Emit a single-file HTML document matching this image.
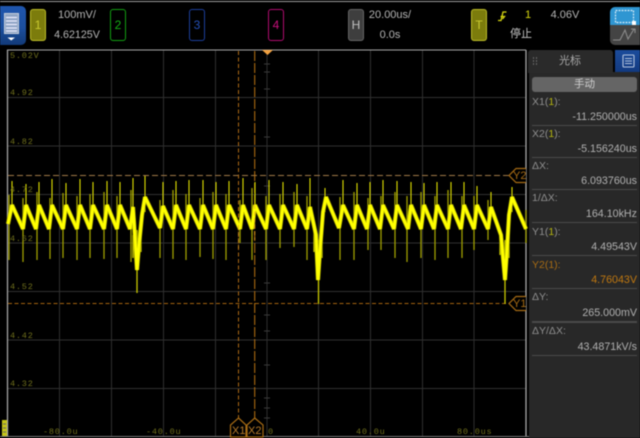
<!DOCTYPE html>
<html><head><meta charset="utf-8">
<style>
html,body{margin:0;padding:0;background:#000;}
#r{position:relative;width:640px;height:438px;overflow:hidden;background:#000;filter:blur(.55px);font-family:"Liberation Sans","Noto Sans CJK SC",sans-serif;color:#b4b4b4;font-size:11px;}
#r div{position:absolute;white-space:nowrap;}
.c{transform:translateX(-50%);}
.b{box-sizing:border-box;border-radius:3px;border-width:1px;border-style:solid;text-align:center;line-height:30px;font-size:12px;}
.l{left:532px;color:#8f8f8f;font-size:10.5px;line-height:12px;}
.v{right:3px;color:#b0b0b0;font-size:10.7px;line-height:12px;}
.s{left:532px;width:105px;height:1px;background:#4a4a4a;}
.y{color:#b5b50f;}
.a{color:#6e6e1c;font:8.5px/9px "Liberation Mono",monospace;letter-spacing:.8px;}
</style></head><body>
<div id="r">
<div style="left:0;top:1px;width:640px;height:1px;background:#9a9a9a"></div>

<svg style="position:absolute;left:0;top:0" width="640" height="438" viewBox="0 0 640 438">
<path d="M59.5 50V436M111.5 50V436M163.5 50V436M215.5 50V436M267 50V436M318.5 50V436M370.5 50V436M422.5 50V436M474 50V436" stroke="#2e2e2e" stroke-width="1" fill="none"/>
<path d="M8 97.5H526M8 146H526M8 194.5H526M8 243H526M8 291.5H526M8 340H526M8 388.500H526" stroke="#303030" stroke-width="1" fill="none"/>
<path d="M264 64h6M264 72h6M264 89h6M264 137h6M264 186h6M264 283h6M264 315h6M264 331h6M264 365h6M264 398h6M264 408h6M264 418h6" stroke="#3a3a3a" stroke-width="1"/>
<path d="M7.500 50V436" stroke="#a4a4a4" stroke-width="1.300"/>
<path d="M526 50V436" stroke="#a8a8a8" stroke-width="1.300"/>
<path d="M7 50H526" stroke="#a8a8a8" stroke-width="1"/>
<path d="M0 436.500H530" stroke="#777" stroke-width="1"/>
<path d="M8 175.500H510" stroke="#a27a48" stroke-width="1" stroke-dasharray="6 3"/>
<path d="M8 303.500H510" stroke="#a5640f" stroke-width="1" stroke-dasharray="4 2.500"/>
<path d="M238.500 51V418" stroke="#b06c14" stroke-width="1" stroke-dasharray="4 2.500"/>
<path d="M254.700 51V418" stroke="#bc7412" stroke-width="1" stroke-dasharray="10 2"/>
<path d="M262 50H273L267.500 55Z" fill="#f0a040"/>

<path d="M9 195V260M23 198V262M37 192V260M50 198V259M63 193V258M77 196V260M90 194V258M104 192V259M117 196V258M131 190V262M160 200V258M173 190V259M186 194V260M200 198V257M213 192V259M226 194V260M240 200V243M252 188V260M266 196V260M280 194V248M294 192V247M307 196V260M340 197V260M354 192V260M368 198V250M381 196V250M395 192V258M407 196V262M421 192V258M435 196V260M448 190V258M462 196V258M474 196V250M488 200V240M526 210V243" stroke="#a0a000" stroke-width="1.300" fill="none"/>
<path d="M12 181V212M26 184V212M39 182V212M52 179V212M66 183V212M80 179V212M93 182V212M107 181V212M120 182V212M133 178V212M145 176V212M163 182V212M176 181V212M189 180V212M203 180V212M216 182V212M229 181V212M243 178V212M255 182V212M269 180V212M283 182V212M297 184V212M310 178V212M325 188V212M343 180V212M357 183V212M370 182V212M383 180V212M397 181V212M411 182V212M424 183V212M437 182V212M451 182V212M464 182V212M477 186V212M491 192V212M512 187V212" stroke="#e0e000" stroke-width="1.100" fill="none"/>
<path d="M137 230V293M318.500 240V304M505 240V304M133 235V258M141 212V252M314 225V252M322 212V258M500 235V255M509 212V258" stroke="#c8c800" stroke-width="1.300" fill="none"/>
<path d="M8 224L12 205L23 229L26 205L36 229L39 205L49 229L52 205L63 229L66 205L77 229L80 205L90 229L93 205L104 229L107 205L117 229L120 205L130 229L133 207L135 238L137 270L139 245L142 215L145 197L160 228L163 206L173 229L176 205L186 229L189 205L200 229L203 205L213 229L216 205L226 229L229 205L240 229L243 205L252 229L255 205L266 229L269 205L280 229L283 205L294 229L297 205L307 229L310 207L316 235L318 280L320 250L323 212L326 197L339 228L343 205L354 229L357 205L367 229L370 205L380 229L383 205L394 229L397 205L408 229L411 205L421 229L424 205L434 229L437 205L448 229L451 205L461 229L464 205L474 229L477 205L488 229L491 207L501 235L505 280L507 250L509 215L512 197L526 229" stroke="#a8a800" stroke-width="4.300" fill="none" stroke-linejoin="bevel"/>
<path d="M8 224L12 205L23 229L26 205L36 229L39 205L49 229L52 205L63 229L66 205L77 229L80 205L90 229L93 205L104 229L107 205L117 229L120 205L130 229L133 207L135 238L137 270L139 245L142 215L145 197L160 228L163 206L173 229L176 205L186 229L189 205L200 229L203 205L213 229L216 205L226 229L229 205L240 229L243 205L252 229L255 205L266 229L269 205L280 229L283 205L294 229L297 205L307 229L310 207L316 235L318 280L320 250L323 212L326 197L339 228L343 205L354 229L357 205L367 229L370 205L380 229L383 205L394 229L397 205L408 229L411 205L421 229L424 205L434 229L437 205L448 229L451 205L461 229L464 205L474 229L477 205L488 229L491 207L501 235L505 280L507 250L509 215L512 197L526 229" stroke="#ffff00" stroke-width="3" fill="none" stroke-linejoin="bevel"/>
<path d="M238.500 225V250M254.700 205V240" stroke="#e8a020" stroke-width="1" stroke-dasharray="4 2.500" opacity=".7"/>

<path d="M526 168.500H516L509 175.500L516 182.500H526" fill="#000" stroke="#a86c14" stroke-width="1.200"/>
<path d="M526 296.500H516L509 303.500L516 310.500H526" fill="#000" stroke="#a86c14" stroke-width="1.200"/>
<path d="M238.500 418L246 425V437H230.500V425Z" fill="#000" stroke="#a86c14" stroke-width="1.200"/>
<path d="M254.700 418L263 425V437H247V425Z" fill="#000" stroke="#a86c14" stroke-width="1.200"/>
<rect x="2" y="420" width="5" height="16" fill="#c4c41a"/>
<path d="M3 424H6M3 428H6M3 432H6" stroke="#666" stroke-width="1"/>
</svg>

<div style="left:513px;top:170px;color:#a86c14;font-size:11px;line-height:12px">Y2</div>
<div style="left:513px;top:298px;color:#a86c14;font-size:11px;line-height:12px">Y1</div>
<div style="left:232px;top:425px;color:#b57a2a;font-size:11px;line-height:12px">X1</div>
<div style="left:248px;top:425px;color:#b57a2a;font-size:11px;line-height:12px">X2</div>

<div class="a" style="left:10px;top:52px">5.02V</div>
<div class="a" style="left:10px;top:89px">4.92</div>
<div class="a" style="left:10px;top:138px">4.82</div>
<div class="a" style="left:10px;top:186px">4.72</div>
<div class="a" style="left:10px;top:235px">4.62</div>
<div class="a" style="left:10px;top:283px">4.52</div>
<div class="a" style="left:10px;top:332px">4.42</div>
<div class="a" style="left:10px;top:380px">4.32</div>
<div class="a" style="left:43px;top:428px">-80.0u</div>
<div class="a" style="left:146px;top:428px">-40.0u</div>
<div class="a" style="left:268px;top:428px">0</div>
<div class="a" style="left:356px;top:428px">40.0u</div>
<div class="a" style="left:457px;top:428px">80.0us</div>

<div style="left:-6px;top:6px;width:32px;height:39px;border-radius:5px;background:linear-gradient(#1f56ae 0%,#1c4f9e 55%,#123a78 100%)"></div>
<svg style="position:absolute;left:0;top:6px" width="30" height="40">
<rect x="4.500" y="7.500" width="14" height="20" fill="#8fa4c4" stroke="#c8d0dc" stroke-width="1"/>
<path d="M6 11.500H17M6 15H17M6 18.500H17M6 22H17M6 25H17" stroke="#eef" stroke-width="1.200"/>
<path d="M7.500 31.500H15L11.200 34.500Z" fill="#fff"/>
</svg>

<div class="b" style="left:30px;top:9px;width:16px;height:32px;background:#7c7c0c;border-color:#bcbc28;color:#c8c830">1</div>
<div class="c" style="left:77px;top:9px;font-size:11px;line-height:13px">100mV/</div>
<div class="c" style="left:77px;top:29px;font-size:10.700px;line-height:13px">4.62125V</div>
<div class="b" style="left:110px;top:9px;width:16px;height:32px;border-color:#12a012;color:#14b014">2</div>
<div class="b" style="left:189px;top:9px;width:16px;height:32px;border-color:#1c3f9c;color:#2450b8">3</div>
<div class="b" style="left:268px;top:9px;width:16px;height:32px;border-color:#b00c70;color:#c8107c">4</div>
<div class="b" style="left:348px;top:9px;width:16px;height:32px;background:#3e3e3e;border-color:#666;color:#c0c0c0">H</div>
<div class="c" style="left:390px;top:9px;font-size:11px;line-height:13px">20.00us/</div>
<div class="c" style="left:390px;top:29px;font-size:11px;line-height:13px">0.0s</div>
<div class="b" style="left:471px;top:9px;width:16px;height:32px;background:#7c7c0c;border-color:#bcbc28;color:#c8c830">T</div>
<svg style="position:absolute;left:496px;top:10px" width="12" height="12"><path d="M2 10.500H5L7 2H10.500M4.500 6.500H8.500L6.500 9" stroke="#d8d810" stroke-width="1.300" fill="none"/></svg>
<div class="c y" style="left:528px;top:9px;font-size:11px;line-height:13px;color:#d8d810">1</div>
<div class="c" style="left:565px;top:9px;font-size:11px;line-height:13px">4.06V</div>
<div class="c" style="left:521px;top:27px;font-size:11px;line-height:14px;color:#c4c4c4">停止</div>

<div style="left:610px;top:7px;width:32px;height:18px;background:#2f96d2;border-radius:5px 0 0 0"></div>
<div style="left:610px;top:25px;width:32px;height:20px;background:#444;border-radius:0 0 0 5px"></div>
<svg style="position:absolute;left:610px;top:7px" width="30" height="38">
<rect x="5.500" y="3.500" width="18" height="12" fill="none" stroke="#cfe8f6" stroke-width="1.200" stroke-dasharray="2 1"/>
<rect x="22" y="14" width="4" height="4" fill="#fff"/>
<path d="M5 33L10 33L15 23L18 32L24 22M21 22H25V26M3 33H6" stroke="#8c8c8c" stroke-width="1.100" fill="none"/>
</svg>

<div style="left:529px;top:72px;width:111px;height:366px;background:#282828"></div>
<div style="left:528px;top:50px;width:85px;height:23px;background:#2a2a2a;border-radius:3px 3px 0 0"></div>
<div class="c" style="left:570px;top:54px;font-size:11px;line-height:14px;color:#a8a8a8">光标</div>
<svg style="position:absolute;left:532px;top:57px" width="100" height="8"><path d="M1 1h1M4 1h1M1 4h1M4 4h1M1 7h1M4 7h1M86 1h1M89 1h1M86 4h1M89 4h1M86 7h1M89 7h1" stroke="#777" stroke-width="1.500"/></svg>
<div style="left:615px;top:50px;width:25px;height:22px;background:linear-gradient(#1c4c9c,#123a80)"></div>
<svg style="position:absolute;left:615px;top:50px" width="25" height="22"><rect x="8" y="5" width="11" height="12" rx="1" fill="none" stroke="#b4c4de" stroke-width="1.100"/><path d="M10 8.500H17M10 11H17M10 13.500H17" stroke="#b4c4de" stroke-width="1"/></svg>

<div style="left:532px;top:77px;width:105px;height:15px;background:#656565;border-radius:3px;text-align:center;line-height:15px;color:#d0d0d0;font-size:10.500px">手动</div>

<div class="l" style="top:96px">X1(<span class="y">1</span>):</div>
<div class="v" style="top:111px">-11.250000us</div>
<div class="s" style="top:125px"></div>
<div class="l" style="top:128px">X2(<span class="y">1</span>):</div>
<div class="v" style="top:143px">-5.156240us</div>
<div class="s" style="top:157px"></div>
<div class="l" style="top:160px">ΔX:</div>
<div class="v" style="top:175px">6.093760us</div>
<div class="s" style="top:189px"></div>
<div class="l" style="top:192px">1/ΔX:</div>
<div class="v" style="top:208px">164.10kHz</div>
<div class="s" style="top:222px"></div>
<div class="l" style="top:226px">Y1(<span class="y">1</span>):</div>
<div class="v" style="top:241px">4.49543V</div>
<div class="s" style="top:255px"></div>
<div class="l" style="top:259px;color:#a86c14">Y2(1):</div>
<div class="v" style="top:274px;color:#c07810">4.76043V</div>
<div class="s" style="top:288px"></div>
<div class="l" style="top:291px">ΔY:</div>
<div class="v" style="top:307px">265.000mV</div>
<div class="s" style="top:321px;height:2px"></div>
<div class="l" style="top:325px">ΔY/ΔX:</div>
<div class="v" style="top:341px">43.4871kV/s</div>
<div class="s" style="top:355px"></div>
</div>
</body></html>
